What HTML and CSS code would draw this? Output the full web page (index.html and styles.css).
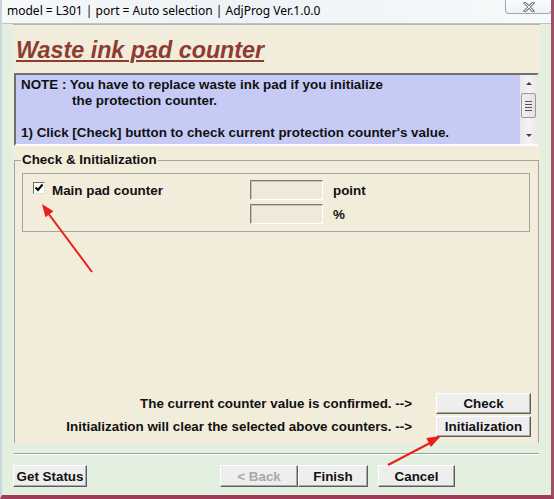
FILE: index.html
```html
<!DOCTYPE html>
<html>
<head>
<meta charset="utf-8">
<link rel="stylesheet" href="styles.css">
</head>
<body>
<div class="window">
  <div class="titlebar">
    <span class="caption">model = L301 | port = Auto selection | AdjProg Ver.1.0.0</span>
    <div class="close">
      <svg width="12" height="10" viewBox="0 0 12 10">
        <path d="M2 1 L10 9 M10 1 L2 9" stroke="#7d8792" stroke-width="3" stroke-linecap="square"/>
        <path d="M2 1 L10 9 M10 1 L2 9" stroke="#f4f6f8" stroke-width="1"/>
      </svg>
    </div>
  </div>
  <div class="client">
    <div class="panel">
      <h1 class="heading">Waste ink pad counter</h1>
      <div class="note">
        <div class="note-text">
          <div>NOTE : You have to replace waste ink pad if you initialize</div>
          <div class="indent">the protection counter.</div>
          <div>&nbsp;</div>
          <div>1) Click [Check] button to check current protection counter's value.</div>
        </div>
        <div class="scrollbar">
          <div class="sb-arrow up"></div>
          <div class="sb-thumb"><span></span><span></span><span></span><span></span></div>
          <div class="sb-track"></div>
          <div class="sb-arrow down"></div>
        </div>
      </div>
      <fieldset class="group">
        <legend>Check &amp; Initialization</legend>
        <div class="counters">
          <div class="counter-row">
            <div class="counter-name">
              <span class="checkbox">
                <svg width="10" height="10" viewBox="0 0 10 10"><path d="M1.5 4.5 L4 7 L8.5 1.5" fill="none" stroke="#000" stroke-width="2"/></svg>
              </span>
              <span>Main pad counter</span>
            </div>
            <div class="field"></div>
            <span class="unit">point</span>
          </div>
          <div class="counter-row">
            <div class="counter-name"></div>
            <div class="field"></div>
            <span class="unit">%</span>
          </div>
        </div>
        <div class="spacer"></div>
        <div class="actions">
          <span class="action-text">The current counter value is confirmed. --&gt;</span>
          <button class="btn">Check</button>
          <span class="action-text">Initialization will clear the selected above counters. --&gt;</span>
          <button class="btn">Initialization</button>
        </div>
      </fieldset>
    </div>
    <div class="separator"></div>
    <div class="footer">
      <button class="btn status">Get Status</button>
      <div class="nav">
        <button class="btn back" disabled>&lt; Back</button>
        <button class="btn finish">Finish</button>
        <button class="btn cancel">Cancel</button>
      </div>
    </div>
  </div>
  <svg class="annotations" width="554" height="499" viewBox="0 0 554 499">
    <line x1="92" y1="272" x2="48" y2="213" stroke="#e8201c" stroke-width="2"/>
    <polygon points="42,204 53.4,211.2 45.4,217.2" fill="#e8201c"/>
    <line x1="388" y1="465" x2="430" y2="443" stroke="#e8201c" stroke-width="2"/>
    <polygon points="441,436 430.9,446.9 426.3,438.1" fill="#e8201c"/>
  </svg>
</div>
</body>
</html>
```

FILE: styles.css
```css
* { box-sizing: border-box; }

html, body {
  margin: 0;
  padding: 0;
  background: #ffffff;
}

.window {
  position: relative;
  width: 554px;
  height: 499px;
  display: flex;
  flex-direction: column;
  background: #e3efdf;
  border-left: 2px solid #c9d6e0;
  border-right: 3px solid #a24e66;
  border-bottom: 4px solid #9d3d57;
  overflow: hidden;
  font-family: "Liberation Sans", Arial, sans-serif;
  font-size: 13.4px;
  font-weight: bold;
  color: #111;
}

/* title bar */
.titlebar {
  height: 24px;
  flex: none;
  display: flex;
  align-items: flex-start;
  margin-left: -2px;
  margin-right: -3px;
  padding-left: 7px;
  background: linear-gradient(90deg, #f6f8fa 0%, #eef3f7 40%, #f3f6f9 70%, #f7f9fa 100%);
  border-bottom: 1px solid #b9c4cc;
}

.caption {
  font-family: "Noto Sans", "Open Sans", sans-serif;
  font-weight: normal;
  font-size: 12px;
  line-height: 16px;
  margin-top: 3px;
  color: #000;
}

.close {
  margin-left: auto;
  margin-right: 2px;
  width: 47px;
  height: 14px;
  border: 1px solid #9ea7b0;
  border-top: none;
  border-radius: 0 0 4px 4px;
  background: linear-gradient(#fbfcfd, #eef1f4);
  display: flex;
  align-items: center;
  justify-content: center;
}

/* client area */
.client {
  flex: 1;
  display: flex;
  flex-direction: column;
  padding: 0 11px 0 11px;
}

.panel {
  height: 419px;
  flex: none;
  display: flex;
  flex-direction: column;
  padding: 0 1px;
  background: #f2ecdb;
  border-top: 1px solid #b4b4b0;
  overflow: hidden;
}

.heading {
  margin: 0;
  padding: 11px 0 0 2px;
  height: 48px;
  font-size: 23.3px;
  line-height: 28px;
  font-style: italic;
  font-weight: bold;
  color: #8d3b33;
  text-decoration: underline;
  text-decoration-thickness: 2px;
  text-underline-offset: 2px;
}

.note {
  height: 73px;
  flex: none;
  display: flex;
  background: #c6cbf6;
  border: 2px solid;
  border-color: #6f6f6f #e8e8e8 #ffffff #6f6f6f;
}

.note-text {
  flex: 1;
  padding: 2px 0 0 5px;
  line-height: 16px;
}

.indent {
  padding-left: 51px;
}

.scrollbar {
  width: 17px;
  display: flex;
  flex-direction: column;
  background: linear-gradient(90deg, #e9e9e9, #f4f4f4 50%, #e9e9e9);
}

.sb-arrow {
  height: 17px;
  position: relative;
}

.sb-arrow::after {
  content: "";
  position: absolute;
  left: 6px;
  top: 7px;
  border-left: 3px solid transparent;
  border-right: 3px solid transparent;
}

.sb-arrow.up::after { border-bottom: 3px solid #404040; }
.sb-arrow.down::after { border-top: 3px solid #404040; }

.sb-thumb {
  height: 25px;
  margin: 1px 1px 0;
  border: 1px solid #9a9a9a;
  border-radius: 2px;
  background: linear-gradient(90deg, #f0f0f0, #e2e2e2);
  display: flex;
  flex-direction: column;
  justify-content: center;
  align-items: center;
  gap: 2px;
}

.sb-thumb span {
  width: 7px;
  height: 1px;
  background: #555;
}

.sb-track { flex: 1; }

/* group box */
.group {
  flex: 1;
  display: flex;
  flex-direction: column;
  margin: 6px 0 0;
  padding: 0;
  min-width: 0;
  border: 1px solid #a3a3a3;
  border-bottom: none;
}

.group legend {
  margin-left: 6px;
  padding: 0 1px;
  line-height: 16px;
}

.counters {
  margin: 5px 8px 0 7px;
  height: 59px;
  padding: 6px 0 0 10px;
  border: 1px solid #a5a5a5;
  display: flex;
  flex-direction: column;
  gap: 4px;
}

.counter-row {
  display: flex;
  align-items: center;
  height: 20px;
}

.counter-name {
  width: 217px;
  display: flex;
  align-items: center;
  gap: 7px;
  align-self: stretch;
}

.checkbox {
  width: 12px;
  height: 12px;
  margin-bottom: 4px;
  background: #fff;
  border: 1px solid;
  border-color: #6a6a6a #e0e0e0 #e0e0e0 #6a6a6a;
  display: flex;
  align-items: center;
  justify-content: center;
}

.field {
  width: 73px;
  height: 20px;
  background: #efe9d8;
  border: 1px solid;
  border-color: #7a7a7a #ffffff #ffffff #7a7a7a;
  box-shadow: inset 1px 1px 0 #c6c2b8;
}

.unit {
  margin-left: 10px;
}

.spacer { flex: 1; }

.actions {
  display: grid;
  grid-template-columns: 1fr 95px;
  column-gap: 24px;
  row-gap: 2px;
  align-items: center;
  margin: 0 7px 6px 0;
}

.action-text {
  text-align: right;
}

/* buttons */
.btn {
  font-family: "Liberation Sans", Arial, sans-serif;
  font-size: 13.4px;
  font-weight: bold;
  color: #111;
  height: 21px;
  padding: 0;
  background: #eeeeee;
  border: 1px solid;
  border-color: #ffffff #5e5e5e #5e5e5e #ffffff;
  box-shadow: inset -1px -1px 0 #a8a8a8;
  border-radius: 0;
}

.separator {
  height: 2px;
  margin: 10px 1px 0;
  border-top: 1px solid #a0a0a0;
  border-bottom: 1px solid #ffffff;
}

.footer {
  display: flex;
  align-items: flex-start;
  margin-top: 10px;
}

.footer .btn { height: 22px; }

.status { width: 74px; }

.nav {
  display: flex;
  margin-left: 133px;
}

.back { width: 78px; color: #a8a8a8; }
.finish { width: 70px; }
.cancel { width: 77px; margin-left: 10px; }

.annotations {
  position: absolute;
  left: -2px;
  top: 0;
  pointer-events: none;
}
```
